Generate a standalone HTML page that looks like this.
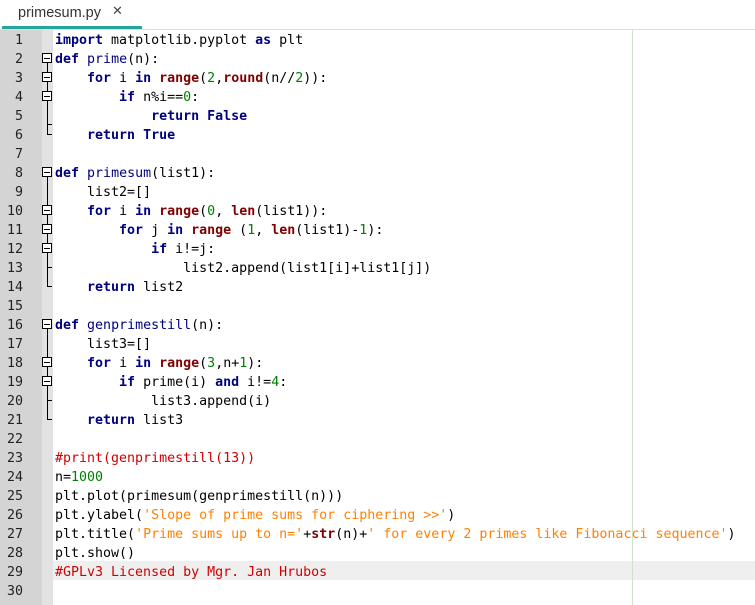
<!DOCTYPE html>
<html><head><meta charset="utf-8"><style>
body{margin:0;width:755px;height:605px;background:#fff;overflow:hidden;position:relative;font-family:"DejaVu Sans Mono","Liberation Mono",monospace;}
.tabbar{position:absolute;left:0;top:0;width:755px;height:29px;background:#fff;border-bottom:1px solid #ddd;}
.tab{position:absolute;left:18px;top:5px;font:14.5px "Liberation Sans",sans-serif;color:#333;}
.x{position:absolute;left:112px;top:4px;font:bold 13px "DejaVu Sans",sans-serif;color:#444;}
.ul{position:absolute;left:2px;top:26px;width:140px;height:3px;background:#26a69a;}
.nums{position:absolute;left:0;top:30px;width:42px;height:575px;background:#d4d4d4;}
.fold{position:absolute;left:42px;top:30px;width:11px;height:575px;background:#e2e2e2;}
.hl{position:absolute;left:53px;top:561px;width:702px;height:19px;background:#efefef;}
.edge{position:absolute;left:632px;top:30px;width:1px;height:575px;background:#c8e6c8;}
.n{width:23px;text-align:right;font-size:13.3px;line-height:19px;color:#222;}
pre{position:absolute;left:55px;top:31px;margin:0;font-size:13.3px;line-height:19px;color:#000;font-family:inherit;}
.k{color:#000080;font-weight:bold}.b{color:#7f0000;font-weight:bold}.d{color:#008000}.s{color:#ff8000}.c{color:#d00000}.f{color:#000080}
</style></head><body>
<div class="tabbar"><span class="tab">primesum.py</span><span class="x">✕</span><div class="ul"></div></div>
<div class="nums"></div><div class="fold"></div><div class="hl"></div><div class="edge"></div>
<svg style="position:absolute;left:0;top:0" width="60" height="605">
<g stroke="#000" stroke-width="1" fill="#fff" shape-rendering="crispEdges">
<path d="M47.5 63V134.5H52M47.5 124.5H52 M47.5 177V286.5H52M47.5 267.5H52 M47.5 329V419.5H52M47.5 400.5H52" fill="none"/>
<rect x="42.5" y="53.5" width="9" height="9"/><rect x="42.5" y="72.5" width="9" height="9"/><rect x="42.5" y="91.5" width="9" height="9"/>
<rect x="42.5" y="167.5" width="9" height="9"/><rect x="42.5" y="205.5" width="9" height="9"/><rect x="42.5" y="224.5" width="9" height="9"/><rect x="42.5" y="243.5" width="9" height="9"/>
<rect x="42.5" y="319.5" width="9" height="9"/><rect x="42.5" y="357.5" width="9" height="9"/><rect x="42.5" y="376.5" width="9" height="9"/>
<path d="M44 58.5h6M44 77.5h6M44 96.5h6M44 172.5h6M44 210.5h6M44 229.5h6M44 248.5h6M44 324.5h6M44 362.5h6M44 381.5h6" fill="none"/>
</g></svg>
<div style="position:absolute;left:0;top:31px">
<div class="n">1</div><div class="n">2</div><div class="n">3</div><div class="n">4</div><div class="n">5</div><div class="n">6</div><div class="n">7</div><div class="n">8</div><div class="n">9</div><div class="n">10</div><div class="n">11</div><div class="n">12</div><div class="n">13</div><div class="n">14</div><div class="n">15</div><div class="n">16</div><div class="n">17</div><div class="n">18</div><div class="n">19</div><div class="n">20</div><div class="n">21</div><div class="n">22</div><div class="n">23</div><div class="n">24</div><div class="n">25</div><div class="n">26</div><div class="n">27</div><div class="n">28</div><div class="n">29</div><div class="n">30</div>
</div>
<pre><span class="k">import</span> matplotlib.pyplot <span class="k">as</span> plt
<span class="k">def</span> <span class="f">prime</span>(n):
    <span class="k">for</span> i <span class="k">in</span> <span class="b">range</span>(<span class="d">2</span>,<span class="b">round</span>(n//<span class="d">2</span>)):
        <span class="k">if</span> n%i==<span class="d">0</span>:
            <span class="k">return</span> <span class="k">False</span>
    <span class="k">return</span> <span class="k">True</span>

<span class="k">def</span> <span class="f">primesum</span>(list1):
    list2=[]
    <span class="k">for</span> i <span class="k">in</span> <span class="b">range</span>(<span class="d">0</span>, <span class="b">len</span>(list1)):
        <span class="k">for</span> j <span class="k">in</span> <span class="b">range</span> (<span class="d">1</span>, <span class="b">len</span>(list1)-<span class="d">1</span>):
            <span class="k">if</span> i!=j:
                list2.append(list1[i]+list1[j])
    <span class="k">return</span> list2

<span class="k">def</span> <span class="f">genprimestill</span>(n):
    list3=[]
    <span class="k">for</span> i <span class="k">in</span> <span class="b">range</span>(<span class="d">3</span>,n+<span class="d">1</span>):
        <span class="k">if</span> prime(i) <span class="k">and</span> i!=<span class="d">4</span>:
            list3.append(i)
    <span class="k">return</span> list3

<span class="c">#print(genprimestill(13))</span>
n=<span class="d">1000</span>
plt.plot(primesum(genprimestill(n)))
plt.ylabel(<span class="s">'Slope of prime sums for ciphering &gt;&gt;'</span>)
plt.title(<span class="s">'Prime sums up to n='</span>+<span class="b">str</span>(n)+<span class="s">' for every 2 primes like Fibonacci sequence'</span>)
plt.show()
<span class="c">#GPLv3 Licensed by Mgr. Jan Hrubos</span>
</pre>
</body></html>
